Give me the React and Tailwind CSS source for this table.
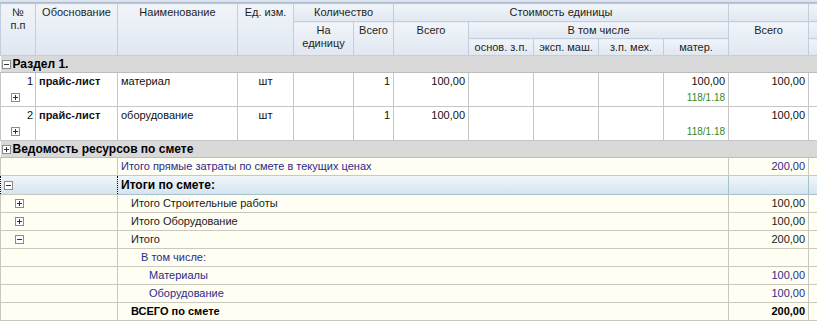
import React from 'react';

const cols = [35, 82, 120, 56, 60, 40, 75, 65, 65, 65, 65, 80, 10];

const font = { fontFamily: '"Liberation Sans", Arial, sans-serif' };

const Box = ({ plus }) => (
  <svg width="9" height="9" viewBox="0 0 9 9" className="inline-block shrink-0">
    <rect x="0.5" y="0.5" width="8" height="8" fill="#fff" stroke="#8c8c8c" />
    <line x1="2" y1="4.5" x2="7" y2="4.5" stroke="#333" />
    {plus && <line x1="4.5" y1="2" x2="4.5" y2="7" stroke="#333" />}
  </svg>
);

const th = 'border border-[#c3cedc] bg-gradient-to-b from-[#f1f5fa] to-[#e0e7f0] font-normal text-center align-top pt-[2px] px-[2px] leading-[13px] text-[#1e1e1e]';
const td = 'border border-[#c6c6c6] align-top px-[3px] pt-[2px] leading-[13px]';
const ty = 'border border-[#c9c9c0] px-[3px] leading-[13px] h-[18px] align-middle';

const Header = () => (
  <thead>
    <tr className="h-[18px]">
      <th rowSpan={3} className={th}>№<br />п.п</th>
      <th rowSpan={3} className={th}>Обоснование</th>
      <th rowSpan={3} className={th}>Наименование</th>
      <th rowSpan={3} className={th}>Ед. изм.</th>
      <th colSpan={2} className={th}>Количество</th>
      <th colSpan={5} className={th}>Стоимость единицы</th>
      <th className={th}></th>
      <th className={th}></th>
    </tr>
    <tr className="h-[17px]">
      <th rowSpan={2} className={th}>На<br />единицу</th>
      <th rowSpan={2} className={th}>Всего</th>
      <th rowSpan={2} className={th}>Всего</th>
      <th colSpan={4} className={th}>В том числе</th>
      <th rowSpan={2} className={th}>Всего</th>
      <th className={th}></th>
    </tr>
    <tr className="h-[17px]">
      <th className={th}>основ. з.п.</th>
      <th className={th}>эксп. маш.</th>
      <th className={th}>з.п. мех.</th>
      <th className={th}>матер.</th>
      <th className={th}></th>
    </tr>
  </thead>
);

const SectionRow = ({ label, plus }) => (
  <tr className="h-[17px] bg-[#d9d9d9]">
    <td colSpan={13} className="border-y border-[#bdbdbd] px-[1px] leading-[13px] align-middle">
      <div className="flex items-center gap-[2px] font-bold text-[12px] text-black">
        <Box plus={plus} />
        <span>{label}</span>
      </div>
    </td>
  </tr>
);

const ItemRow = ({ n, name, mat }) => (
  <tr className="h-[34px] bg-white">
    <td className={td + ' !px-0'}>
      <div className="flex flex-col justify-between h-[30px]">
        <div className="text-right pr-[2px]">{n}</div>
        <div className="pl-[10px] pb-[3px] leading-none"><Box plus /></div>
      </div>
    </td>
    <td className={td + ' font-bold'}>прайс-лист</td>
    <td className={td}>{name}</td>
    <td className={td + ' text-center'}>шт</td>
    <td className={td}></td>
    <td className={td + ' text-right'}>1</td>
    <td className={td + ' text-right'}>100,00</td>
    <td className={td}></td>
    <td className={td}></td>
    <td className={td}></td>
    <td className={td + ' text-right'}>
      <div className="flex flex-col justify-between h-[30px]">
        <div>{mat}</div>
        <div className="text-[10px] text-[#2f8a2f] pb-[1px]">118/1.18</div>
      </div>
    </td>
    <td className={td + ' text-right'}>100,00</td>
    <td className={td}></td>
  </tr>
);

const TotalRow = ({ icon, label, value, indent = 'pl-[13px]', blue, bold }) => (
  <tr className="bg-[#fefef2]">
    <td colSpan={2} className={ty}>
      {icon && <div className="pl-[11px] flex items-center"><Box plus={icon === 'plus'} /></div>}
    </td>
    <td colSpan={9} className={ty + ' ' + indent + (blue ? ' text-[#2b2b8e]' : ' text-[#1a1a1a]') + (bold ? ' font-bold text-black' : '')}>
      {label}
    </td>
    <td className={ty + ' text-right' + (blue ? ' text-[#2b2b8e]' : ' text-[#1a1a1a]') + (bold ? ' font-bold text-black' : '')}>
      {value}
    </td>
    <td className={ty}></td>
  </tr>
);

export default function App() {
  return (
    <div className="w-[817px] h-[336px] overflow-hidden bg-white text-[11px] text-[#111]" style={font}>
      <div className="h-[3px] bg-[#dde4ee] border-b border-[#aab7c8]" />
      <table className="table-fixed border-collapse w-[818px]">
        <colgroup>
          {cols.map((w, i) => (
            <col key={i} style={{ width: w }} />
          ))}
        </colgroup>
        <Header />
        <tbody>
          <SectionRow label="Раздел 1." />
          <ItemRow n="1" name="материал" mat="100,00" />
          <ItemRow n="2" name="оборудование" mat="" />
          <SectionRow label="Ведомость ресурсов по смете" plus />
          <TotalRow label="Итого прямые затраты по смете в текущих ценах" value="200,00" indent="pl-[3px]" blue />
          <tr className="h-[18px] bg-gradient-to-b from-[#f0f6fa] to-[#d3e4ee]">
            <td colSpan={2} className="border border-dotted border-black px-[3px] align-middle">
              <div className="flex items-center"><Box /></div>
            </td>
            <td colSpan={9} className="border-y border-[#a9c0cf] px-[3px] font-bold text-[12px] text-black align-middle">Итоги по смете:</td>
            <td className="border border-[#a9c0cf] border-t-[#c9c9c0]"></td>
            <td className="border border-[#a9c0cf] border-t-[#c9c9c0]"></td>
          </tr>
          <TotalRow icon="plus" label="Итого Строительные работы" value="100,00" />
          <TotalRow icon="plus" label="Итого Оборудование" value="100,00" />
          <TotalRow icon="minus" label="Итого" value="200,00" />
          <TotalRow label="В том числе:" value="" indent="pl-[23px]" blue />
          <TotalRow label="Материалы" value="100,00" indent="pl-[31px]" blue />
          <TotalRow label="Оборудование" value="100,00" indent="pl-[31px]" blue />
          <TotalRow label="ВСЕГО по смете" value="200,00" bold />
        </tbody>
      </table>
    </div>
  );
}
